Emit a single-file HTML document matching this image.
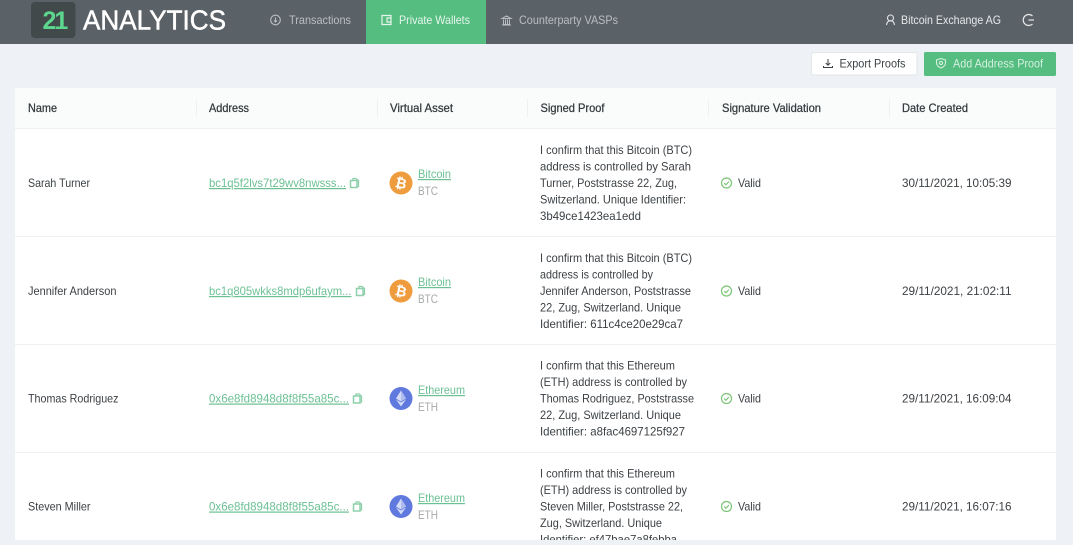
<!DOCTYPE html>
<html><head><meta charset="utf-8"><title>21 Analytics</title>
<style>
html,body{margin:0;padding:0;background:#eef1f5;width:1073px;height:545px;overflow:hidden}
svg{display:block;filter:blur(.3px)}
text{font-family:"Liberation Sans",sans-serif;font-size:12px;fill:#3c4145}
.h{fill:#33383c;stroke:#33383c;stroke-width:.25}
.n{fill:#b9bec1}
.l{fill:#6cc193;text-decoration:underline}
.m{fill:#a6a9ab}
.sep{stroke:#eef0f1;stroke-width:1}
.div{stroke:#eef0f2;stroke-width:1}
</style></head><body>
<svg width="1073" height="545" viewBox="0 0 1073 545" xmlns="http://www.w3.org/2000/svg">
<defs>
<g id="copy"><path d="M-3.5-2.500v7h6.500v-7z" fill="none" stroke="#8fd0ac" stroke-width="1.500"/><path d="M-1-2.500v-2h3l2.500 2v6H3" fill="none" stroke="#8fd0ac" stroke-width="1.300"/></g>
<g id="chk"><circle r="5" fill="none" stroke="#7cc576" stroke-width="1.200"/><path d="M-2.300 0l1.700 1.800 3-3.200" fill="none" stroke="#7cc576" stroke-width="1.200"/></g>
<g id="btc"><circle r="11.500" fill="#ee9c3e"/><text x="0" y="5" text-anchor="middle" transform="rotate(12)" style="font-size:14px;font-weight:bold;fill:#fff">₿</text></g>
<g id="eth"><circle r="11.500" fill="#6079de"/><path d="M0-8L5 0 0 3-5 0z" fill="#d5dcf6"/><path d="M0-8L5 0 0 3z" fill="#aebcf0"/><path d="M0 4L5 1 0 8-5 1z" fill="#d5dcf6"/></g>
</defs>

<rect width="1073" height="545" fill="#eef1f5"/>
<rect width="1073" height="44" fill="#5a6167"/>
<rect x="31" y="2" width="44.500" height="36" rx="4" fill="#41494b"/>
<text x="42.500" y="29" style="font-size:25px;font-weight:bold;fill:#5dd78e;letter-spacing:-2px" transform="translate(0 0)">21</text>
<text x="83" y="29.500" textLength="143" lengthAdjust="spacingAndGlyphs" style="font-size:28px;fill:#fff;stroke:#fff;stroke-width:.5">ANALYTICS</text>

<g fill="none" stroke="#b9bec1" stroke-width="1.100"><circle cx="275.500" cy="20" r="4.800"/><path d="M275.500 17.500v4M274 20.500l1.500 1.500 1.500-1.500"/></g>
<text class="n" x="289" y="24" textLength="62" lengthAdjust="spacingAndGlyphs">Transactions</text>
<rect x="366" width="120" height="44" fill="#55bd80"/>
<g fill="none" stroke="#e6f5ec" stroke-width="1.200"><path d="M382 15.500h9v9h-9z"/><path d="M391 18h-4v4h4"/></g>
<text class="n" x="399" y="24" textLength="71" lengthAdjust="spacingAndGlyphs" style="fill:#e6f5ec">Private Wallets</text>
<g fill="none" stroke="#b9bec1" stroke-width="1"><path d="M502 18.500l4.500-2.500 4.500 2.500zM503 24.500h7M502 25h9M503.500 19.500v4.500M505.500 19.500v4.500M507.500 19.500v4.500M509.500 19.500v4.500"/></g>
<text class="n" x="519" y="24" textLength="99" lengthAdjust="spacingAndGlyphs">Counterparty VASPs</text>

<g fill="none" stroke="#e6e8e9" stroke-width="1.100"><circle cx="890.500" cy="18" r="3"/><path d="M886.500 25c.5-3.500 2-4.200 4-4.200s3.500.7 4 4.200"/></g>
<text class="n" x="901" y="24" textLength="100" lengthAdjust="spacingAndGlyphs" style="fill:#e6e8e9">Bitcoin Exchange AG</text>
<g fill="none" stroke="#e6e8e9" stroke-width="1.200"><path d="M1032.500 16a5.500 5.500 0 1 0 0 8"/><path d="M1028.500 20h5.500"/></g>

<rect x="811.500" y="52.500" width="105.500" height="22.500" rx="1.500" fill="#fff" stroke="#e4e6e8"/>
<g fill="none" stroke="#3c4145" stroke-width="1"><path d="M828 59v6M825.800 63l2.200 2.200 2.200-2.200M823.500 66v1.500h9V66"/></g>
<text x="839.500" y="67.500" textLength="66" lengthAdjust="spacingAndGlyphs">Export Proofs</text>
<rect x="924" y="52" width="132" height="24" rx="1.500" fill="#55bd80"/>
<g fill="none" stroke="#d5f0df" stroke-width="1.100"><path d="M941 58.500l4.500 1.500v3c0 2.500-2 4-4.500 5-2.500-1-4.500-2.500-4.500-5v-3z"/><circle cx="941" cy="63" r="1.600"/></g>
<text x="953" y="67.500" textLength="90" lengthAdjust="spacingAndGlyphs" style="fill:#d5f0df">Add Address Proof</text>

<rect x="15" y="88" width="1041" height="452" fill="#fff"/>
<rect x="15" y="88" width="1041" height="40" fill="#fafbfb"/>
<path class="div" d="M15 128.500H1056M15 236.500H1056M15 344.500H1056M15 452.500H1056"/>
<path class="sep" d="M196.500 99v18M377.500 99v18M527.500 99v18M708.500 99v18M889.500 99v18"/>
<text class="h" x="28" y="112" textLength="29" lengthAdjust="spacingAndGlyphs">Name</text>
<text class="h" x="209" y="112" textLength="40" lengthAdjust="spacingAndGlyphs">Address</text>
<text class="h" x="390" y="112" textLength="63" lengthAdjust="spacingAndGlyphs">Virtual Asset</text>
<text class="h" x="540.500" y="112" textLength="64" lengthAdjust="spacingAndGlyphs">Signed Proof</text>
<text class="h" x="722" y="112" textLength="99" lengthAdjust="spacingAndGlyphs">Signature Validation</text>
<text class="h" x="902" y="112" textLength="66" lengthAdjust="spacingAndGlyphs">Date Created</text>

<text x="28" y="187" textLength="62" lengthAdjust="spacingAndGlyphs">Sarah Turner</text>
<text class="l" x="209" y="187" textLength="137" lengthAdjust="spacingAndGlyphs">bc1q5f2lvs7t29wv8nwsss...</text>
<use href="#copy" x="354" y="183"/>
<use href="#btc" x="401" y="183"/>
<text class="l" x="418" y="178" textLength="33" lengthAdjust="spacingAndGlyphs">Bitcoin</text>
<text class="m" x="418" y="195" textLength="20" lengthAdjust="spacingAndGlyphs">BTC</text>
<text x="540" y="154" textLength="152" lengthAdjust="spacingAndGlyphs">I confirm that this Bitcoin (BTC)</text>
<text x="540" y="170.500" textLength="151" lengthAdjust="spacingAndGlyphs">address is controlled by Sarah</text>
<text x="540" y="187" textLength="137" lengthAdjust="spacingAndGlyphs">Turner, Poststrasse 22, Zug,</text>
<text x="540" y="203.500" textLength="146" lengthAdjust="spacingAndGlyphs">Switzerland. Unique Identifier:</text>
<text x="540" y="220" textLength="101" lengthAdjust="spacingAndGlyphs">3b49ce1423ea1edd</text>
<use href="#chk" x="726.500" y="183"/>
<text x="738" y="187" textLength="23" lengthAdjust="spacingAndGlyphs">Valid</text>
<text x="902" y="187" textLength="109.500" lengthAdjust="spacingAndGlyphs">30/11/2021, 10:05:39</text>

<text x="28" y="295" textLength="88.500" lengthAdjust="spacingAndGlyphs">Jennifer Anderson</text>
<text class="l" x="209" y="295" textLength="142.500" lengthAdjust="spacingAndGlyphs">bc1q805wkks8mdp6ufaym...</text>
<use href="#copy" x="360" y="291"/>
<use href="#btc" x="401" y="291"/>
<text class="l" x="418" y="286" textLength="33" lengthAdjust="spacingAndGlyphs">Bitcoin</text>
<text class="m" x="418" y="303" textLength="20" lengthAdjust="spacingAndGlyphs">BTC</text>
<text x="540" y="262" textLength="152" lengthAdjust="spacingAndGlyphs">I confirm that this Bitcoin (BTC)</text>
<text x="540" y="278.500" textLength="113" lengthAdjust="spacingAndGlyphs">address is controlled by</text>
<text x="540" y="295" textLength="151" lengthAdjust="spacingAndGlyphs">Jennifer Anderson, Poststrasse</text>
<text x="540" y="311.500" textLength="141" lengthAdjust="spacingAndGlyphs">22, Zug, Switzerland. Unique</text>
<text x="540" y="328" textLength="143" lengthAdjust="spacingAndGlyphs">Identifier: 611c4ce20e29ca7</text>
<use href="#chk" x="726.500" y="291"/>
<text x="738" y="295" textLength="23" lengthAdjust="spacingAndGlyphs">Valid</text>
<text x="902" y="295" textLength="109.500" lengthAdjust="spacingAndGlyphs">29/11/2021, 21:02:11</text>

<text x="28" y="402.500" textLength="90.500" lengthAdjust="spacingAndGlyphs">Thomas Rodriguez</text>
<text class="l" x="209" y="402.500" textLength="140" lengthAdjust="spacingAndGlyphs">0x6e8fd8948d8f8f55a85c...</text>
<use href="#copy" x="357" y="398.500"/>
<use href="#eth" x="401" y="398.500"/>
<text class="l" x="418" y="394" textLength="47" lengthAdjust="spacingAndGlyphs">Ethereum</text>
<text class="m" x="418" y="411" textLength="20" lengthAdjust="spacingAndGlyphs">ETH</text>
<text x="540" y="369.500" textLength="135" lengthAdjust="spacingAndGlyphs">I confirm that this Ethereum</text>
<text x="540" y="386" textLength="147" lengthAdjust="spacingAndGlyphs">(ETH) address is controlled by</text>
<text x="540" y="402.500" textLength="154" lengthAdjust="spacingAndGlyphs">Thomas Rodriguez, Poststrasse</text>
<text x="540" y="419" textLength="141" lengthAdjust="spacingAndGlyphs">22, Zug, Switzerland. Unique</text>
<text x="540" y="435.500" textLength="145" lengthAdjust="spacingAndGlyphs">Identifier: a8fac4697125f927</text>
<use href="#chk" x="726.500" y="398.500"/>
<text x="738" y="402.500" textLength="23" lengthAdjust="spacingAndGlyphs">Valid</text>
<text x="902" y="402.500" textLength="109.500" lengthAdjust="spacingAndGlyphs">29/11/2021, 16:09:04</text>

<text x="28" y="510.500" textLength="62.500" lengthAdjust="spacingAndGlyphs">Steven Miller</text>
<text class="l" x="209" y="510.500" textLength="140" lengthAdjust="spacingAndGlyphs">0x6e8fd8948d8f8f55a85c...</text>
<use href="#copy" x="357" y="506.500"/>
<use href="#eth" x="401" y="506.500"/>
<text class="l" x="418" y="502" textLength="47" lengthAdjust="spacingAndGlyphs">Ethereum</text>
<text class="m" x="418" y="519" textLength="20" lengthAdjust="spacingAndGlyphs">ETH</text>
<text x="540" y="477.500" textLength="135" lengthAdjust="spacingAndGlyphs">I confirm that this Ethereum</text>
<text x="540" y="494" textLength="147" lengthAdjust="spacingAndGlyphs">(ETH) address is controlled by</text>
<text x="540" y="510.500" textLength="143" lengthAdjust="spacingAndGlyphs">Steven Miller, Poststrasse 22,</text>
<text x="540" y="527" textLength="122" lengthAdjust="spacingAndGlyphs">Zug, Switzerland. Unique</text>
<text x="540" y="543.500" textLength="137" lengthAdjust="spacingAndGlyphs">Identifier: ef47bae7a8febba</text>
<use href="#chk" x="726.500" y="506.500"/>
<text x="738" y="510.500" textLength="23" lengthAdjust="spacingAndGlyphs">Valid</text>
<text x="902" y="510.500" textLength="109.500" lengthAdjust="spacingAndGlyphs">29/11/2021, 16:07:16</text>

<rect y="540" width="1073" height="5" fill="#eef1f5"/>
</svg>
</body></html>
